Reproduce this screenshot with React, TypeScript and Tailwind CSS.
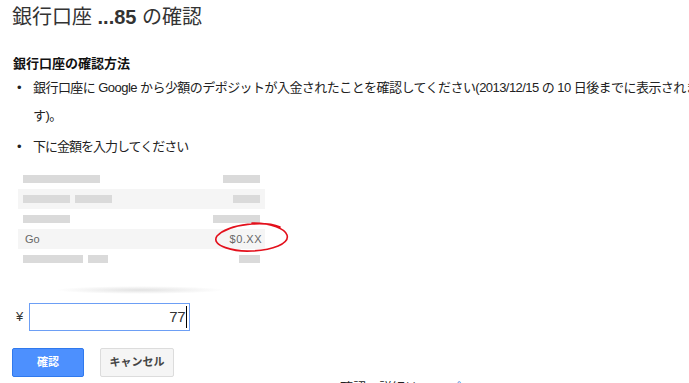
import React from 'react';

const Bar: React.FC<{ w: string }> = ({ w }) => <div className={`h-[8px] bg-[#dadada] ${w}`} />;

const App: React.FC = () => {
  return (
    <div className="w-[689px] h-[383px] overflow-hidden bg-white text-[#222] font-['Liberation_Sans','Noto_Sans_CJK_JP',sans-serif]">
      <div className="w-[820px] pl-[12px]">
        {/* title */}
        <div className="h-[35px] leading-[35px] text-[20px] text-[#333] whitespace-nowrap">
          銀行口座 <span className="font-bold">...85</span> の確認
        </div>

        <h3 className="mt-[19px] ml-[1px] h-[20px] leading-[20px] text-[13px] font-bold text-[#111]">銀行口座の確認方法</h3>

        <ul className="text-[13px] leading-[28px]">
          <li className="flex">
            <span className="w-[21px] pl-[5px] shrink-0">•</span>
            <div className="whitespace-nowrap tracking-[-0.55px]">
              銀行口座に Google から少額のデポジットが入金されたことを確認してください(2013/12/15 の 10 日後までに表示されま
              <br />
              す)。
            </div>
          </li>
          <li className="flex mt-[3px]">
            <span className="w-[21px] pl-[5px] shrink-0">•</span>
            <div className="tracking-[-1px]">下に金額を入力してください</div>
          </li>
        </ul>

        {/* sample statement */}
        <div className="relative mt-[8px] ml-[6px] w-[247px]">
          <div className="h-[20px] px-[5px] flex items-center justify-between">
            <Bar w="w-[77px]" />
            <Bar w="w-[37px]" />
          </div>
          <div className="h-[20px] px-[5px] flex items-center justify-between bg-[#f5f5f5]">
            <div className="flex gap-[5px]">
              <Bar w="w-[47px]" />
              <Bar w="w-[37px]" />
            </div>
            <Bar w="w-[27px]" />
          </div>
          <div className="h-[20px] px-[5px] flex items-center justify-between">
            <Bar w="w-[47px]" />
            <Bar w="w-[47px]" />
          </div>
          <div className="h-[20px] pl-[7px] pr-[3px] flex items-center justify-between bg-[#f5f5f5] text-[11px] text-[#666]">
            <span>Go</span>
            <span className="tracking-[0.5px]">$0.XX</span>
          </div>
          <div className="h-[20px] px-[5px] flex items-center justify-between">
            <div className="flex gap-[5px]">
              <Bar w="w-[60px]" />
              <Bar w="w-[20px]" />
            </div>
            <Bar w="w-[21px]" />
          </div>

          <svg className="absolute left-[192px] top-[49px]" width="85" height="38" viewBox="0 0 85 38" fill="none">
            <path
              d="M70 9 C55 3, 20 5, 7 18 C0 28, 25 34, 42 33 C62 32, 80 26, 77 17 C75 11, 62 5, 42 5"
              stroke="#e3101c"
              strokeWidth="1.6"
              strokeLinecap="round"
            />
          </svg>

          <div className="mt-[17px] ml-[37px] w-[170px] h-[8px] rounded-[50%] bg-[radial-gradient(ellipse_at_center,#e2e2e2,transparent_70%)]" />
        </div>

        {/* amount */}
        <div className="mt-[9px] flex items-center">
          <span className="w-[17px] pl-[4px] text-[13px] text-[#333]">¥</span>
          <div className="w-[161px] h-[28px] border border-[#6d9ff5] flex items-center justify-end pr-[2px] text-[15px] text-[#333]">
            <span className="tracking-[-0.5px]">77</span>
            <span className="ml-[1px] w-[1px] h-[22px] bg-black" />
          </div>
        </div>

        {/* actions */}
        <div className="mt-[17px] flex gap-[16px]">
          <button className="w-[72px] h-[29px] rounded-[2px] border border-[#3079ed] bg-[#4d90fe] text-white text-[11px] font-bold">
            確認
          </button>
          <button className="w-[74px] h-[29px] rounded-[2px] border border-[#dcdcdc] bg-[#f5f5f5] text-[#444] text-[11px] font-bold">
            キャンセル
          </button>
        </div>

        <div className="mt-[3px] pl-[328px] h-[16px] leading-[16px] text-[13px] text-[#222] whitespace-nowrap">
          確認の詳細は <a className="text-[#1155cc]">ヘルプ</a>
        </div>
      </div>
    </div>
  );
};

export default App;
